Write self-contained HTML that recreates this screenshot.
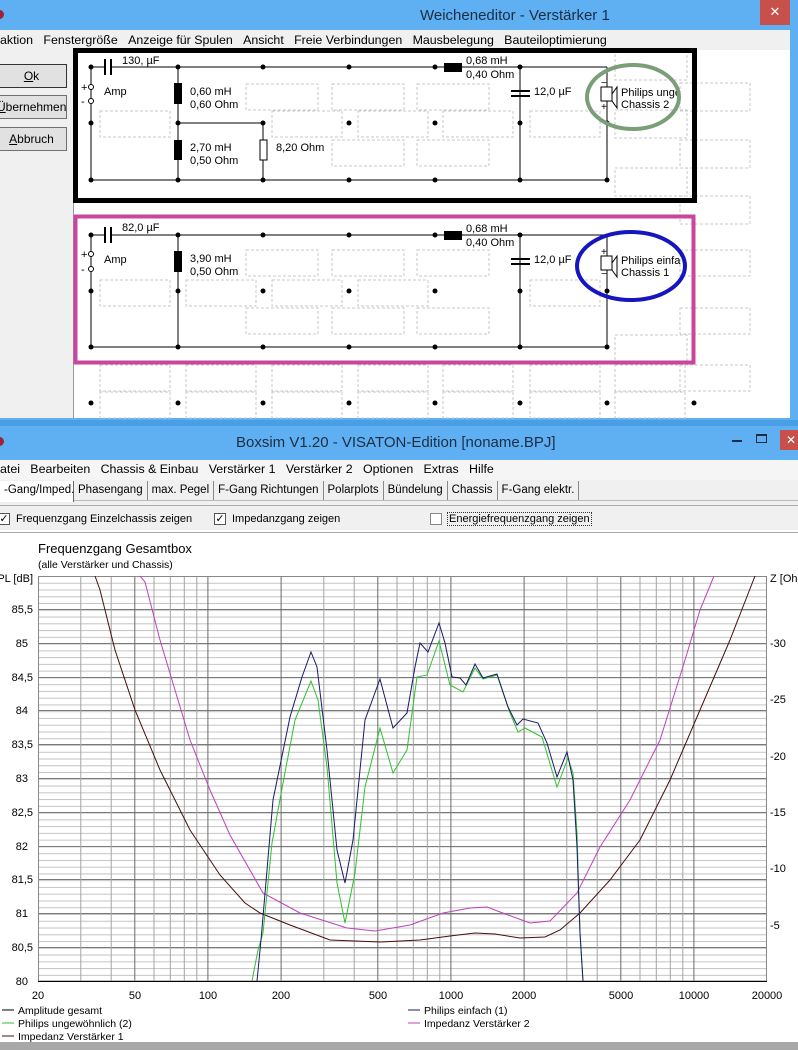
<!DOCTYPE html>
<html><head><meta charset="utf-8"><style>
*{margin:0;padding:0;box-sizing:border-box}
body{width:798px;height:1050px;overflow:hidden;background:#fff;font-family:"Liberation Sans",sans-serif;font-size:12px;color:#000;position:relative}
.a{position:absolute;white-space:nowrap}
.btn{position:absolute;left:-4px;width:71px;height:24px;background:#e1e1e1;border:1px solid #707070;text-align:center;line-height:22px;font-size:12px}
.tab{display:inline-block;padding:0 4px;border-right:1px solid #888;height:19px;line-height:19px}
.cb{position:absolute;width:12px;height:12px;border:1px solid #555;background:#fff;font-size:11px;line-height:10px;text-align:center}
.sm{font-size:11px}
</style></head><body>
<!-- Top window -->
<div class="a" style="left:0;top:0;width:798px;height:420px;background:#5fb0f2"></div>
<div class="a" style="left:0;top:30px;width:790px;height:388px;background:#f0f0f0"></div>
<div class="a" style="left:0;top:0;font-size:0"><div style="position:absolute;left:-5px;top:10px;width:9px;height:9px;border-radius:50%;background:#a0203a"></div></div>
<div class="a" style="left:420px;top:7px;font-size:15px;color:#1d2d44">Weicheneditor - Verstärker 1</div>
<div class="a" style="left:760px;top:0;width:30px;height:25px;background:#c7504a;color:#fff;text-align:center;line-height:23px;font-size:13px">✕</div>
<div class="a" style="left:0;top:33px;font-size:12.4px;word-spacing:0">aktion&nbsp;&nbsp;&nbsp;Fenstergröße&nbsp;&nbsp;&nbsp;Anzeige für Spulen&nbsp;&nbsp;&nbsp;Ansicht&nbsp;&nbsp;&nbsp;Freie Verbindungen&nbsp;&nbsp;&nbsp;Mausbelegung&nbsp;&nbsp;&nbsp;Bauteiloptimierung</div>
<div class="btn" style="top:64px;border:1px solid #333"><u>O</u>k</div>
<div class="btn" style="top:95px"><u>Ü</u>bernehmen</div>
<div class="btn" style="top:127px"><u>A</u>bbruch</div>
<div class="a" style="left:73px;top:50px;width:717px;height:368px;background:#fff;border-left:1px solid #999"></div>

<svg class="a" style="left:0;top:0" width="798" height="420" xmlns="http://www.w3.org/2000/svg">
<g fill="none" stroke="#c8c8c8" stroke-dasharray="3,2">
<rect x="615" y="52" width="72" height="28"/><rect x="680" y="83" width="70" height="28"/><rect x="615" y="110" width="72" height="28"/><rect x="680" y="140" width="70" height="28"/><rect x="615" y="168" width="72" height="28"/><rect x="680" y="196" width="70" height="28"/>
<rect x="246" y="84" width="72" height="26"/><rect x="332" y="84" width="72" height="26"/><rect x="417" y="84" width="72" height="26"/>
<rect x="100" y="111" width="70" height="26"/><rect x="272" y="111" width="70" height="26"/><rect x="358" y="111" width="70" height="26"/><rect x="443" y="111" width="70" height="26"/><rect x="530" y="111" width="70" height="26"/>
<rect x="332" y="140" width="72" height="26"/><rect x="417" y="140" width="72" height="26"/>
<rect x="100" y="280" width="70" height="26"/><rect x="246" y="250" width="72" height="26"/><rect x="332" y="250" width="72" height="26"/><rect x="417" y="250" width="72" height="26"/>
<rect x="186" y="280" width="70" height="26"/><rect x="272" y="280" width="70" height="26"/><rect x="358" y="280" width="70" height="26"/><rect x="530" y="280" width="70" height="26"/>
<rect x="246" y="308" width="72" height="26"/><rect x="332" y="308" width="72" height="26"/><rect x="417" y="308" width="72" height="26"/>
<rect x="680" y="250" width="70" height="26"/><rect x="680" y="308" width="70" height="26"/><rect x="615" y="335" width="72" height="28"/><rect x="680" y="365" width="70" height="26"/>
<rect x="100" y="365" width="70" height="26"/><rect x="186" y="365" width="70" height="26"/><rect x="272" y="365" width="70" height="26"/><rect x="358" y="365" width="70" height="26"/><rect x="443" y="365" width="70" height="26"/><rect x="530" y="365" width="70" height="26"/><rect x="615" y="365" width="70" height="26"/>
<rect x="100" y="392" width="70" height="26"/><rect x="186" y="392" width="70" height="26"/><rect x="272" y="392" width="70" height="26"/><rect x="358" y="392" width="70" height="26"/><rect x="443" y="392" width="70" height="26"/><rect x="530" y="392" width="70" height="26"/><rect x="615" y="392" width="70" height="26"/>
</g>
<g stroke="#000" stroke-width="1" fill="none">
<path d="M91 67H105M111 67H444M462 67H607M91 67V180M91 180H607M178 67V180M178 123H263V180M520 67V180M607 67V180M263 140V160"/>
<path d="M105 59V75M111 59V75" stroke-width="2"/>
<path d="M511 91H530M511 96H530" stroke-width="2"/>
<rect x="260" y="140" width="7" height="20" fill="#fff"/>
<rect x="601" y="87" width="11" height="14" fill="#fff"/>
<path d="M612 94l5-7v21l-5-7"/>
</g>
<g fill="#000"><rect x="174" y="83" width="8" height="21"/><rect x="174" y="140" width="8" height="20"/><rect x="444" y="63" width="18" height="9"/></g>
<g fill="#000"><circle cx="91" cy="67" r="2.5"/><circle cx="178" cy="67" r="2.5"/><circle cx="263" cy="67" r="2.5"/><circle cx="349" cy="67" r="2.5"/><circle cx="435" cy="67" r="2.5"/><circle cx="520" cy="67" r="2.5"/>
<circle cx="91" cy="123" r="2.5"/><circle cx="178" cy="123" r="2.5"/><circle cx="263" cy="123" r="2.5"/><circle cx="349" cy="123" r="2.5"/><circle cx="435" cy="123" r="2.5"/><circle cx="520" cy="123" r="2.5"/><circle cx="607" cy="123" r="2.5"/>
<circle cx="91" cy="180" r="2.5"/><circle cx="178" cy="180" r="2.5"/><circle cx="263" cy="180" r="2.5"/><circle cx="349" cy="180" r="2.5"/><circle cx="435" cy="180" r="2.5"/><circle cx="520" cy="180" r="2.5"/><circle cx="607" cy="180" r="2.5"/></g>
<g fill="#fff" stroke="#000"><circle cx="91" cy="87" r="2.5"/><circle cx="91" cy="101" r="2.5"/></g>
<g stroke="#000" stroke-width="1" fill="none">
<path d="M91 235H105M111 235H444M462 235H607M91 235V347M91 347H607M178 235V347M520 235V347M607 235V347"/>
<path d="M105 227V243M111 227V243" stroke-width="2"/>
<path d="M511 259H530M511 264H530" stroke-width="2"/>
<rect x="601" y="256" width="11" height="14" fill="#fff"/>
<path d="M612 263l5-7v21l-5-7"/>
</g>
<g fill="#000"><rect x="174" y="251" width="8" height="21"/><rect x="444" y="231" width="18" height="9"/></g>
<g fill="#000"><circle cx="91" cy="235" r="2.5"/><circle cx="178" cy="235" r="2.5"/><circle cx="263" cy="235" r="2.5"/><circle cx="349" cy="235" r="2.5"/><circle cx="435" cy="235" r="2.5"/><circle cx="520" cy="235" r="2.5"/>
<circle cx="91" cy="291" r="2.5"/><circle cx="178" cy="291" r="2.5"/><circle cx="263" cy="291" r="2.5"/><circle cx="349" cy="291" r="2.5"/><circle cx="435" cy="291" r="2.5"/><circle cx="520" cy="291" r="2.5"/><circle cx="607" cy="291" r="2.5"/>
<circle cx="91" cy="347" r="2.5"/><circle cx="178" cy="347" r="2.5"/><circle cx="263" cy="347" r="2.5"/><circle cx="349" cy="347" r="2.5"/><circle cx="435" cy="347" r="2.5"/><circle cx="520" cy="347" r="2.5"/><circle cx="607" cy="347" r="2.5"/>
<circle cx="91" cy="403" r="2.5"/><circle cx="178" cy="403" r="2.5"/><circle cx="263" cy="403" r="2.5"/><circle cx="349" cy="403" r="2.5"/><circle cx="435" cy="403" r="2.5"/><circle cx="520" cy="403" r="2.5"/><circle cx="607" cy="403" r="2.5"/><circle cx="694" cy="403" r="2.5"/></g>
<g fill="#fff" stroke="#000"><circle cx="91" cy="254" r="2.5"/><circle cx="91" cy="269" r="2.5"/></g>
<g font-family="Liberation Sans,sans-serif" font-size="11" fill="#000">
<text x="122" y="64">130, µF</text><text x="104" y="95">Amp</text><text x="81" y="91">+</text><text x="81" y="105">-</text>
<text x="190" y="95">0,60 mH</text><text x="190" y="108">0,60 Ohm</text>
<text x="190" y="151">2,70 mH</text><text x="190" y="164">0,50 Ohm</text><text x="276" y="151">8,20 Ohm</text>
<text x="466" y="64">0,68 mH</text><text x="466" y="78">0,40 Ohm</text><text x="534" y="95">12,0 µF</text>
<text x="621" y="96">Philips unge</text><text x="621" y="108">Chassis 2</text><text x="601" y="86" font-size="10">−</text><text x="601" y="110" font-size="10">+</text>
<text x="122" y="231">82,0 µF</text><text x="104" y="263">Amp</text><text x="81" y="258">+</text><text x="81" y="273">-</text>
<text x="190" y="262">3,90 mH</text><text x="190" y="275">0,50 Ohm</text>
<text x="466" y="232">0,68 mH</text><text x="466" y="246">0,40 Ohm</text><text x="534" y="263">12,0 µF</text>
<text x="621" y="264">Philips einfa</text><text x="621" y="276">Chassis 1</text><text x="601" y="255" font-size="10">+</text><text x="601" y="277" font-size="10">−</text>
</g>
<rect x="75.5" y="50.5" width="619" height="150" fill="none" stroke="#000" stroke-width="5"/>
<rect x="75.5" y="216.5" width="618" height="146" fill="none" stroke="#c8469c" stroke-width="4"/>
<ellipse cx="633" cy="97" rx="46" ry="32" fill="none" stroke="#7a9e78" stroke-width="4"/>
<ellipse cx="631" cy="266" rx="54" ry="34" fill="none" stroke="#1616c0" stroke-width="4"/>
</svg>

<div class="a" style="left:0;top:420px;width:798px;height:40px;background:#5fb0f2"></div>
<div class="a" style="left:0;top:420px;width:798px;height:6px;background:#4a9ee6"></div>
<div class="a" style="left:-5px;top:437px;width:9px;height:9px;border-radius:50%;background:#a0203a"></div>
<div class="a" style="left:236px;top:434px;font-size:15px;color:#1d2d44">Boxsim V1.20 - VISATON-Edition [noname.BPJ]</div>
<div class="a" style="left:732px;top:440px;width:10px;height:2px;background:#1d2d44"></div>
<div class="a" style="left:756px;top:434px;width:11px;height:9px;border:1px solid #1d2d44;border-top-width:2px"></div>
<div class="a" style="left:780px;top:430px;width:18px;height:20px;background:#c7504a;color:#fff;font-size:12px;line-height:20px;padding-left:6px">✕</div>
<div class="a" style="left:0;top:460px;width:798px;height:20px;background:#f5f5f5"></div>
<div class="a" style="left:0;top:462px;font-size:12.4px">atei&nbsp;&nbsp;&nbsp;Bearbeiten&nbsp;&nbsp;&nbsp;Chassis &amp; Einbau&nbsp;&nbsp;&nbsp;Verstärker 1&nbsp;&nbsp;&nbsp;Verstärker 2&nbsp;&nbsp;&nbsp;Optionen&nbsp;&nbsp;&nbsp;Extras&nbsp;&nbsp;&nbsp;Hilfe</div>
<div class="a" style="left:0;top:480px;width:798px;height:50px;background:#f0f0f0"></div>
<div class="a" style="left:0;top:500px;width:798px;height:1px;background:#bbb"></div>
<div class="a sm" style="left:0;top:481px;font-size:11.5px"><span class="tab" style="background:#fff;height:21px;border-right:1px solid #666;width:74px">-Gang/Imped.</span><span class="tab">Phasengang</span><span class="tab">max. Pegel</span><span class="tab">F-Gang Richtungen</span><span class="tab">Polarplots</span><span class="tab">Bündelung</span><span class="tab">Chassis</span><span class="tab">F-Gang elektr.</span></div>
<div class="a" style="left:0;top:505px;width:798px;height:1px;background:#aaa"></div>
<div class="cb" style="left:-2px;top:513px">✓</div><div class="a sm" style="left:16px;top:513px">Frequenzgang Einzelchassis zeigen</div>
<div class="cb" style="left:214px;top:513px">✓</div><div class="a sm" style="left:232px;top:513px">Impedanzgang zeigen</div>
<div class="cb" style="left:430px;top:513px;border-color:#888"></div><div class="a sm" style="left:447px;top:512px;border:1px dotted #333;padding:0 1px">Energiefrequenzgang zeigen</div>
<div class="a" style="left:0;top:532px;width:798px;height:1px;background:#aaa"></div>
<div class="a" style="left:0;top:1042px;width:798px;height:8px;background:#a8a8a8"></div>

<svg class="a" style="left:0;top:533px" width="798" height="509" xmlns="http://www.w3.org/2000/svg">
<g transform="translate(0,-533)" font-family="Liberation Sans,sans-serif" font-size="11">
<text x="38" y="553" font-size="13">Frequenzgang Gesamtbox</text>
<text x="38" y="568" font-size="10.5">(alle Verstärker und Chassis)</text>
<defs><pattern id="hm" x="0" y="576" width="10" height="6.76" patternUnits="userSpaceOnUse"><line x1="0" y1="0.5" x2="10" y2="0.5" stroke="#c4c4c4"/></pattern></defs>
<rect x="38" y="576" width="729" height="405" fill="url(#hm)"/>
<g stroke="#7a7a7a">
<path d="M38 609.5H767M38 643.5H767M38 677.5H767M38 710.5H767M38 744.5H767M38 778.5H767M38 812.5H767M38 846.5H767M38 879.5H767M38 913.5H767M38 947.5H767"/>
</g>
<g stroke="#a4a4a4">
<path d="M80.8 576V981M111.2 576V981M154 576V981M170.3 576V981M184.3 576V981M196.8 576V981M323.8 576V981M354.2 576V981M397 576V981M413.3 576V981M427.3 576V981M439.8 576V981M566.8 576V981M597.2 576V981M640 576V981M656.3 576V981M670.3 576V981M682.8 576V981"/>
</g>
<g stroke="#6a6a6a">
<path d="M134.8 576V981M207.9 576V981M281.1 576V981M377.8 576V981M450.9 576V981M524.1 576V981M620.8 576V981M693.9 576V981"/>
</g>
<rect x="38.5" y="576.5" width="728" height="404.5" fill="none" stroke="#888"/>
<path d="M38 981.5H767" stroke="#000"/>
<path fill="none" stroke="#4a0e0e" d="M95 576L100 590L115 650L135 710L160 770L190 830L220 875L245 903L260 913L290 925L330 940L380 942L420 940L450 936L475 933L495 934L520 938L545 937L560 930L580 913L610 880L640 840L670 780L700 710L730 640L755 576"/>
<path fill="none" stroke="#c040c0" d="M140 576L145 582L160 640L175 690L190 740L210 790L230 835L263 893L300 913L347 928L375 931L410 925L443 913L470 908L487 907L500 912L530 923L550 921L577 893L600 847L630 800L660 740L685 660L700 610L714 576"/>
<path fill="none" stroke="#30c030" d="M252 981L258 950L263 933L272 843L283 783L295 720L311 681L318 700L327 767L337 883L345 923L355 873L365 787L380 728L393 773L407 750L417 677L427 675L439 641L450 685L463 692L475 668L483 679L497 675L510 713L518 732L525 728L542 737L557 787L568 758L573 773L577 833L580 933L583 981"/>
<path fill="none" stroke="#1a1a6a" d="M257 981L261 940L273 800L290 717L302 677L311 652L317 667L327 750L337 850L345 883L353 840L365 720L380 679L393 728L407 713L415 667L420 643L428 652L439 623L445 643L452 677L460 678L466 685L475 664L483 678L497 674L508 707L517 725L523 719L538 723L547 743L557 777L567 752L573 780L577 847L580 933L583 981"/>
<g text-anchor="end"><text x="33" y="582">PL [dB]</text><text x="33" y="613">85,5</text><text x="28" y="647">85</text><text x="33" y="681">84,5</text><text x="28" y="714">84</text><text x="33" y="748">83,5</text><text x="28" y="782">83</text><text x="33" y="816">82,5</text><text x="28" y="850">82</text><text x="33" y="883">81,5</text><text x="28" y="917">81</text><text x="33" y="951">80,5</text><text x="28" y="985">80</text></g>
<g><text x="770" y="582">Z [Oh</text><text x="770" y="647">-30</text><text x="770" y="703">-25</text><text x="770" y="760">-20</text><text x="770" y="816">-15</text><text x="770" y="872">-10</text><text x="770" y="929">-5</text></g>
<g text-anchor="middle"><text x="38" y="999">20</text><text x="135" y="999">50</text><text x="208" y="999">100</text><text x="281" y="999">200</text><text x="378" y="999">500</text><text x="451" y="999">1000</text><text x="524" y="999">2000</text><text x="621" y="999">5000</text><text x="694" y="999">10000</text><text x="767" y="999">20000</text></g>
<g font-size="10.5">
<path d="M2 1010H14" stroke="#000"/><text x="18" y="1014">Amplitude gesamt</text>
<path d="M2 1023H14" stroke="#30c030"/><text x="18" y="1027">Philips ungewöhnlich (2)</text>
<path d="M2 1036H14" stroke="#4a0e0e"/><text x="18" y="1040">Impedanz Verstärker 1</text>
<path d="M408 1010H420" stroke="#1a1a6a"/><text x="424" y="1014">Philips einfach (1)</text>
<path d="M408 1023H420" stroke="#c040c0"/><text x="424" y="1027">Impedanz Verstärker 2</text>
</g>
</g>
</svg>
</body></html>
